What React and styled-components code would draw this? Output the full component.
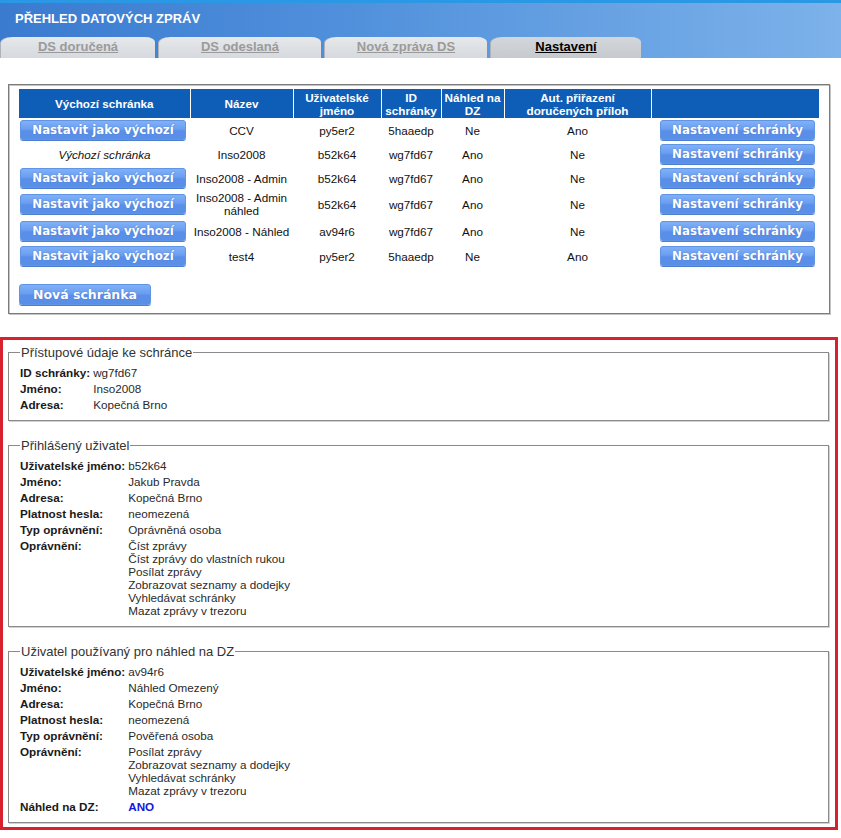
import React from "react";
import styled, { createGlobalStyle } from "styled-components";

const GlobalStyle = createGlobalStyle`
  html, body { margin: 0; padding: 0; background: #fff; }
  body {
    font-family: "Liberation Sans", Arial, sans-serif;
    font-size: 11.7px;
    color: #000;
  }
  *, *::before, *::after { box-sizing: border-box; }
`;

const Header = styled.header`
  height: 58px;
  border-top: 3px solid #2a98e4;
  background: linear-gradient(to right, #3a7bd0 0%, #4f8fdb 40%, #7db2ea 100%);
  display: flex;
  flex-direction: column;
`;

const Title = styled.h1`
  margin: 0;
  height: 34px;
  padding: 8px 0 0 15px;
  font: bold 13px/15px "Liberation Sans", Arial, sans-serif;
  color: #fff;
`;

const TabRow = styled.nav`
  display: flex;
  gap: 3px;
  height: 21px;
`;

const Tab = styled.a`
  width: ${(p) => p.$w}px;
  height: 21px;
  padding-bottom: 2px;
  text-align: center;
  font: bold 13px/19px "Liberation Sans", Arial, sans-serif;
  color: ${(p) => (p.$active ? "#000" : "#9a9a9a")};
  text-decoration: underline;
  background: ${(p) =>
    p.$active
      ? "linear-gradient(to bottom, #d3d6da, #c6cace)"
      : "linear-gradient(to bottom, #e6e8eb, #d6d9dd)"};
  border-left: 1px solid #aeb3b9;
  border-radius: 12px 10px 0 0 / 6px 5px 0 0;
  cursor: pointer;
`;

const Panel = styled.div`
  margin: 26px 0 0 8px;
  width: 822px;
  border: 1px solid #7c7c7c;
  box-shadow: 1px 1px 0 #c4c4c4, inset 1px 1px 0 #c4c4c4;
  padding: 4px 8px 8px 10px;
`;

const Table = styled.table`
  width: 800px;
  table-layout: fixed;
  border-collapse: collapse;
`;

const Th = styled.th`
  background: #0e5db6;
  color: #fff;
  font-weight: bold;
  font-size: 11.7px;
  line-height: 13px;
  padding: 1px;
  height: 29px;
  text-align: center;
  vertical-align: middle;
  & + & { border-left: 1px solid #fff; }
`;

const Tr = styled.tr`
  height: ${(p) => p.$h || 24}px;
`;

const Td = styled.td`
  padding: ${(p) => (p.$align === "right" ? "1px 4px 1px 1px" : "1px")};
  line-height: 13px;
  text-align: ${(p) => p.$align || "center"};
  vertical-align: middle;
  font-style: ${(p) => (p.$italic ? "italic" : "normal")};
  color: #111;
`;

const Btn = styled.button`
  display: inline-flex;
  align-items: center;
  justify-content: center;
  width: ${(p) => p.$w}px;
  height: ${(p) => p.$h || 20}px;
  padding: 0;
  margin: 0;
  border: 1px solid #5f95e4;
  border-radius: 3px;
  background: linear-gradient(to bottom, #80b0f6 0%, #6a9ef0 45%, #5a8fe9 55%, #5a8fe8 100%);
  box-shadow: 0 1px 0 #4f7fd0;
  color: #fff;
  font-family: "DejaVu Sans", Verdana, sans-serif;
  font-weight: bold;
  font-size: ${(p) => p.$fs || 11.8}px;
  white-space: nowrap;
  text-shadow: 0 0 1px rgba(40, 80, 170, 0.7);
  vertical-align: middle;
  cursor: pointer;
`;

const NewRow = styled.div`
  margin-top: 16px;
  display: flex;
`;

const RedFrame = styled.section`
  margin-top: 23px;
  width: 838px;
  border: 3px solid #d8212f;
  padding: 5px 6px 4px 5px;
`;

const Fieldset = styled.fieldset`
  margin: 0;
  min-width: 0;
  border: 1px solid #8a8a8a;
  box-shadow: 1px 1px 0 #d2d2d2;
  padding: 4px 10px 8px 11px;
  & + & { margin-top: 17px; }
`;

const Legend = styled.legend`
  padding: 0 1px;
  font-size: 13px;
  line-height: 15px;
  color: #333;
`;

const InfoGrid = styled.div`
  display: grid;
  grid-template-columns: max-content 1fr;
  column-gap: 3px;
`;

const Label = styled.div`
  font-weight: bold;
  padding: 2px 0 1px;
  line-height: 13px;
  color: #1a1a1a;
`;

const Value = styled.div`
  padding: 2px 0 1px;
  line-height: 13px;
  color: ${(p) => (p.$accent ? "#1616dc" : "#2a2a2a")};
  font-weight: ${(p) => (p.$accent ? "bold" : "normal")};
`;

const Line = styled.div`
  line-height: 13px;
`;

const cols = [171, 103, 88, 60, 63, 147, 168];

const rows = [
  { def: false, name: "CCV", user: "py5er2", id: "5haaedp", nahled: "Ne", aut: "Ano" },
  { def: true, name: "Inso2008", user: "b52k64", id: "wg7fd67", nahled: "Ano", aut: "Ne" },
  { def: false, name: "Inso2008 - Admin", user: "b52k64", id: "wg7fd67", nahled: "Ano", aut: "Ne" },
  { def: false, name: "Inso2008 - Admin náhled", user: "b52k64", id: "wg7fd67", nahled: "Ano", aut: "Ne", h: 28 },
  { def: false, name: "Inso2008 - Náhled", user: "av94r6", id: "wg7fd67", nahled: "Ano", aut: "Ne", h: 26 },
  { def: false, name: "test4", user: "py5er2", id: "5haaedp", nahled: "Ne", aut: "Ano" },
];

const Info = ({ items }) => (
  <InfoGrid>
    {items.map(([label, value, accent]) => (
      <React.Fragment key={label}>
        <Label>{label}</Label>
        <Value $accent={accent}>
          {Array.isArray(value) ? value.map((v) => <Line key={v}>{v}</Line>) : value}
        </Value>
      </React.Fragment>
    ))}
  </InfoGrid>
);

export default function App() {
  return (
    <>
      <GlobalStyle />
      <Header>
        <Title>PŘEHLED DATOVÝCH ZPRÁV</Title>
        <TabRow>
          <Tab $w={155}>DS doručená</Tab>
          <Tab $w={163}>DS odeslaná</Tab>
          <Tab $w={163}>Nová zpráva DS</Tab>
          <Tab $w={151} $active>Nastavení</Tab>
        </TabRow>
      </Header>

      <Panel>
        <Table>
          <colgroup>
            {cols.map((w, i) => (
              <col key={i} style={{ width: w }} />
            ))}
          </colgroup>
          <thead>
            <tr>
              <Th>Výchozí schránka</Th>
              <Th>Název</Th>
              <Th>Uživatelské jméno</Th>
              <Th>ID schránky</Th>
              <Th>Náhled na DZ</Th>
              <Th>Aut. přiřazení doručených příloh</Th>
              <Th />
            </tr>
          </thead>
          <tbody>
            {rows.map((r, i) => (
              <Tr key={i} $h={r.h}>
                {r.def ? (
                  <Td $italic>Výchozí schránka</Td>
                ) : (
                  <Td $align="left">
                    <Btn $w={166}>Nastavit jako výchozí</Btn>
                  </Td>
                )}
                <Td>{r.name}</Td>
                <Td>{r.user}</Td>
                <Td>{r.id}</Td>
                <Td>{r.nahled}</Td>
                <Td>{r.aut}</Td>
                <Td $align="right">
                  <Btn $w={155}>Nastavení schránky</Btn>
                </Td>
              </Tr>
            ))}
          </tbody>
        </Table>
        <NewRow>
          <Btn $w={132} $h={21} $fs={12.5}>Nová schránka</Btn>
        </NewRow>
      </Panel>

      <RedFrame>
        <Fieldset>
          <Legend>Přístupové údaje ke schránce</Legend>
          <Info
            items={[
              ["ID schránky:", "wg7fd67"],
              ["Jméno:", "Inso2008"],
              ["Adresa:", "Kopečná Brno"],
            ]}
          />
        </Fieldset>
        <Fieldset>
          <Legend>Přihlášený uživatel</Legend>
          <Info
            items={[
              ["Uživatelské jméno:", "b52k64"],
              ["Jméno:", "Jakub Pravda"],
              ["Adresa:", "Kopečná Brno"],
              ["Platnost hesla:", "neomezená"],
              ["Typ oprávnění:", "Oprávněná osoba"],
              [
                "Oprávnění:",
                [
                  "Číst zprávy",
                  "Číst zprávy do vlastních rukou",
                  "Posílat zprávy",
                  "Zobrazovat seznamy a dodejky",
                  "Vyhledávat schránky",
                  "Mazat zprávy v trezoru",
                ],
              ],
            ]}
          />
        </Fieldset>
        <Fieldset>
          <Legend>Uživatel používaný pro náhled na DZ</Legend>
          <Info
            items={[
              ["Uživatelské jméno:", "av94r6"],
              ["Jméno:", "Náhled Omezený"],
              ["Adresa:", "Kopečná Brno"],
              ["Platnost hesla:", "neomezená"],
              ["Typ oprávnění:", "Pověřená osoba"],
              [
                "Oprávnění:",
                [
                  "Posílat zprávy",
                  "Zobrazovat seznamy a dodejky",
                  "Vyhledávat schránky",
                  "Mazat zprávy v trezoru",
                ],
              ],
              ["Náhled na DZ:", "ANO", true],
            ]}
          />
        </Fieldset>
      </RedFrame>
    </>
  );
}
